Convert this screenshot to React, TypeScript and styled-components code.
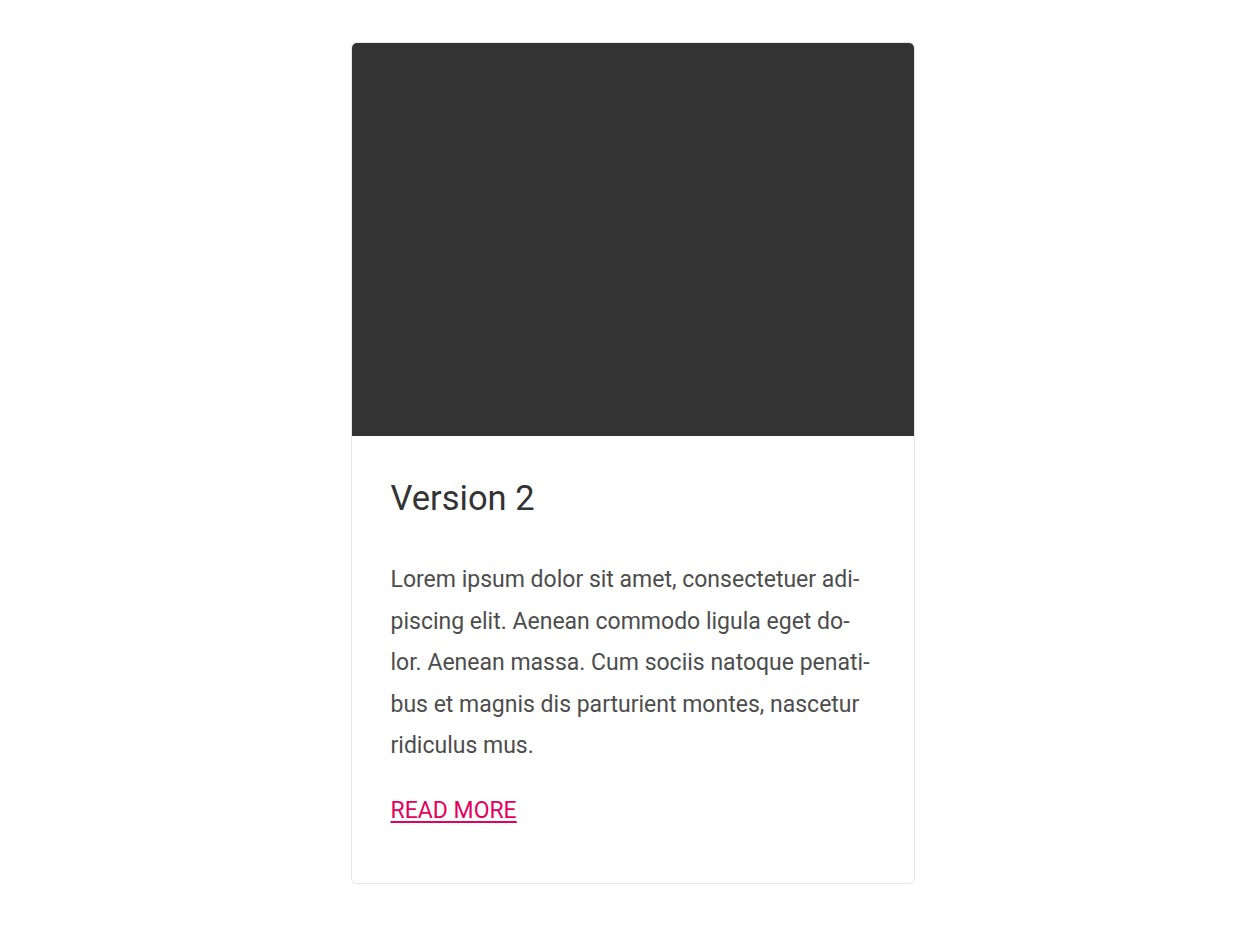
import React from "react";
import styled, { createGlobalStyle } from "styled-components";

const Global = createGlobalStyle`
  html, body { margin: 0; padding: 0; background: #ffffff; }
  body { font-family: Roboto, "Noto Sans", sans-serif; }
`;

const Page = styled.div`
  display: flex;
  justify-content: center;
  padding: 42px 0 0 5px;
`;

const Card = styled.article`
  width: 564px;
  box-sizing: border-box;
  border: 1px solid #e6e6e6;
  border-radius: 6px;
  overflow: hidden;
  background: #fff;
  display: flex;
  flex-direction: column;
`;

const Media = styled.div`
  height: 393px;
  background: #333333;
`;

const Body = styled.div`
  padding: 39px 41px 57px 39px;
  display: flex;
  flex-direction: column;
`;

const Title = styled.h2`
  margin: 0 0 38px 0;
  font-size: 34.5px;
  line-height: 46px;
  font-weight: 400;
  color: #333333;
`;

const Text = styled.p`
  margin: 0 0 29px 0;
  font-size: 23px;
  line-height: 41.5px;
  color: #4d4d4d;
`;

const More = styled.a`
  align-self: flex-start;
  font-size: 23px;
  line-height: 30px;
  color: #e5005b;
  text-decoration: underline;
  text-underline-offset: 3px;
`;

export default function App() {
  return (
    <>
      <Global />
      <Page>
        <Card>
          <Media />
          <Body>
            <Title>Version 2</Title>
            <Text>
              Lorem ipsum dolor sit amet, consectetuer adi&shy;piscing elit. Aenean commodo ligula eget do&shy;lor. Aenean massa. Cum sociis natoque penati&shy;bus et magnis dis parturient montes, nascetur ridiculus mus.
            </Text>
            <More href="#">READ MORE</More>
          </Body>
        </Card>
      </Page>
    </>
  );
}
